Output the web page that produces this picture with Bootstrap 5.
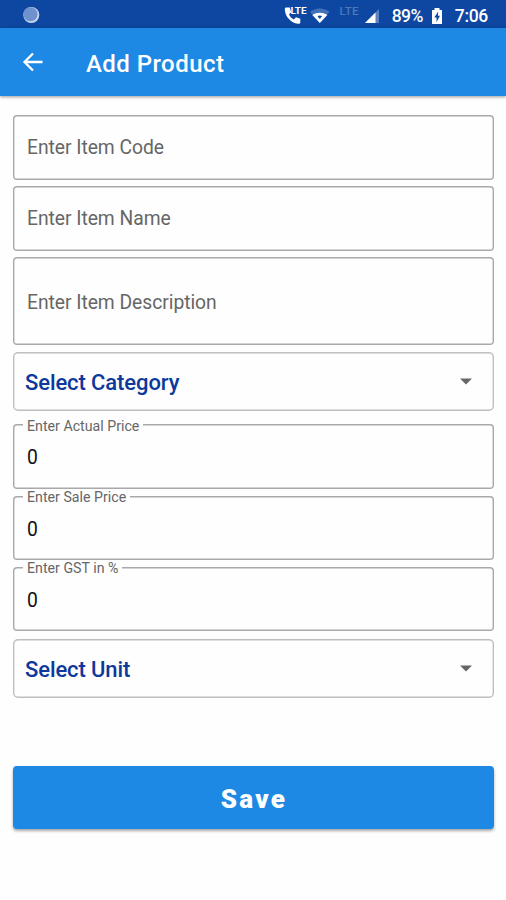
<!DOCTYPE html>
<html lang="en">
<head>
<meta charset="utf-8">
<meta name="viewport" content="width=device-width, initial-scale=1">
<title>Add Product</title>
<link href="https://cdn.jsdelivr.net/npm/bootstrap@5.3.0/dist/css/bootstrap.min.css" rel="stylesheet">
<style>
body{font-family:Roboto,sans-serif;background:#fefefe;color:#111;min-height:900px}
.status-bar{height:28px;background:#0d47a1;color:#fff;font-size:17.5px;font-weight:500;padding:4px 18px 0 22px;line-height:24px}
.disc{margin-top:-2px}
.battery-pct{margin-left:11px;letter-spacing:-.6px}
.battery{margin-left:8px}
.clock{margin-left:12px;letter-spacing:-.3px}
.app-bar{height:68px;background:#1e88e5;color:#fff;padding:0 20px;box-shadow:0 1px 3px rgba(0,0,0,.4)}
.app-title{font-size:24px;font-weight:500;margin:3px 0 0 40px;letter-spacing:.45px;line-height:30px}
.product-form{padding:19px 12px 0 13px}
.box{height:65px;border:0;border-radius:4px;box-shadow:inset 0 0 0 1.4px #a9a9a9;background:transparent;padding:0 14px 1px;font-size:19.3px;letter-spacing:-.04px;color:#111}
.box:focus{background:transparent;box-shadow:inset 0 0 0 2px #1e88e5}
.box::placeholder{color:#666;opacity:1}
.gap-s{margin-bottom:6px}
.tall{height:88px;margin-bottom:7px;padding-top:3px}
.field{margin-bottom:7px}
.field .box{height:64px;padding-top:4px}
.field-first .box{height:65px;padding-top:3px}
.field-last{margin-bottom:8px}
.picker{height:59px;border-radius:5px;box-shadow:inset 0 0 0 1.4px #bcc0c0;background:transparent;border:0;padding:1px 22px 0 12px;font-size:22px;font-weight:500;color:#0d389c;letter-spacing:-.1px}
.picker svg{margin-top:-1px}
.picker-first{margin-bottom:13px}
.float-label{left:10px;top:-7px;padding:0 4px;background:linear-gradient(#fefefe,#fefefe) 0 6px/100% 5px no-repeat;font-size:14.2px;line-height:17px;color:#666}
.field-first .float-label{top:-6px}
.save-btn{height:63px;margin-top:68px;border:0;border-radius:4px;background:#1e88e5;color:#fff;font-size:26px;font-weight:900;letter-spacing:2.3px;box-shadow:0 2px 3px rgba(0,0,0,.35);padding:3px 0 0 1px}
.save-btn:hover{background:#1e88e5;color:#fff}
</style>
<script src="https://cdn.jsdelivr.net/npm/bootstrap@5.3.0/dist/js/bootstrap.bundle.min.js"></script>
</head>
<body>
<div class="status-bar d-flex align-items-center justify-content-between">
  <svg class="disc" width="18" height="18" viewBox="0 0 18 18"><circle cx="9.3" cy="9" r="8" fill="#c7d6ee"/><circle cx="8.5" cy="8.2" r="7" fill="#6f91cd"/></svg>
  <div class="d-flex align-items-center">
    <svg width="98" height="24" viewBox="0 0 98 24">
      <path d="M3.200 3.500h3.500l1.500 4.800-2.200 2c1 2.500 2.600 4.200 4.800 5.200l2.200-2.200 4.300 1.500v3.800c0 .8-.5 1.200-1.200 1.200C8 19.500 1.800 12.500 1.800 5c0-.9.500-1.500 1.400-1.500Z" fill="#fff"/>
      <text x="7.500" y="9.500" font-family="Roboto" font-size="9.500" font-weight="700" fill="#fff" textLength="16" lengthAdjust="spacingAndGlyphs">LTE</text>
      <path d="M27 8c5.500-4.800 14-4.800 19.500 0L36.800 19Z" fill="#4470b8"/>
      <path d="M29.300 11c4.400-3 10.600-3 15 0L36.800 19Z" fill="#fff"/>
      <path d="M34.500 12.200c1.500-.8 3.100-.8 4.600 0L36.800 15Z" fill="#0d47a1"/>
      <text x="56.500" y="11" font-family="Roboto" font-size="11.500" font-weight="500" fill="#4f77ba" textLength="19" lengthAdjust="spacing">LTE</text>
      <path d="M82 19 96 5V19Z" fill="#5c82c2"/><path d="M82 19 92.500 8.500V19Z" fill="#fff"/>
    </svg>
    <span class="battery-pct">89%</span>
    <svg class="battery" width="12" height="18" viewBox="0 0 12 18"><path d="M3.500 1h5v2H11v14H1V3h2.500Z" fill="#fff"/><path d="M7.200 4.500 3.300 10.500h2.200v4.500l3.500-6.200H6.900Z" fill="#0d47a1"/></svg>
    <span class="clock">7:06</span>
  </div>
</div>
<header class="app-bar d-flex align-items-center">
  <svg width="26" height="26" viewBox="0 0 26 26" fill="none" stroke="#fff" stroke-width="2.300"><path d="M22.500 13H4.800M13 4.500 4.500 13l8.500 8.500"/></svg>
  <h1 class="app-title">Add Product</h1>
</header>
<form class="product-form">
  <input class="form-control box gap-s" placeholder="Enter Item Code" aria-label="Item code">
  <input class="form-control box gap-s" placeholder="Enter Item Name" aria-label="Item name">
  <input class="form-control box tall" placeholder="Enter Item Description" aria-label="Item description">
  <button type="button" class="picker picker-first w-100 d-flex align-items-center justify-content-between">Select Category
    <svg width="12" height="7" viewBox="0 0 12 7"><path d="M0 .5h12L6 6.500Z" fill="#666"/></svg></button>
  <div class="field field-first position-relative"><input id="actual" class="form-control box" value="0"><label for="actual" class="float-label position-absolute">Enter Actual Price</label></div>
  <div class="field position-relative"><input id="sale" class="form-control box" value="0"><label for="sale" class="float-label position-absolute">Enter Sale Price</label></div>
  <div class="field field-last position-relative"><input id="gst" class="form-control box" value="0"><label for="gst" class="float-label position-absolute">Enter GST in %</label></div>
  <button type="button" class="picker w-100 d-flex align-items-center justify-content-between">Select Unit
    <svg width="12" height="7" viewBox="0 0 12 7"><path d="M0 .5h12L6 6.500Z" fill="#666"/></svg></button>
  <button type="button" class="btn save-btn w-100">Save</button>
</form>
</body>
</html>
